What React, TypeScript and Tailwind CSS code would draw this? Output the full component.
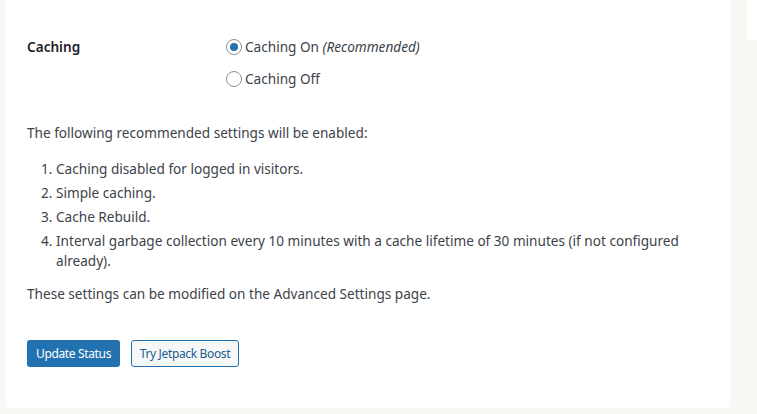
import { useState } from "react";

const FONT = { fontFamily: '"Segoe UI", "Noto Sans", sans-serif' };

function Radio({ checked, onClick, children }: { checked: boolean; onClick: () => void; children: React.ReactNode }) {
  return (
    <label onClick={onClick} className="flex items-center h-[20px] cursor-pointer">
      <span className="w-[16px] h-[16px] rounded-full border border-[#8c8f94] bg-white flex items-center justify-center mr-[3px] shrink-0">
        {checked && <span className="w-[8px] h-[8px] rounded-full bg-[#2271b1]"></span>}
      </span>
      <span>{children}</span>
    </label>
  );
}

export default function App() {
  const [caching, setCaching] = useState(true);

  return (
    <div className="w-[757px] h-[414px] overflow-hidden bg-[#f7f7f4] flex text-[13.6px] leading-[20px] text-[#3c434a]" style={FONT}>
      {/* Settings panel */}
      <div className="ml-[6px] w-[724px] shrink-0 h-[408px] bg-white rounded-b-[4px] px-[21px] pt-[37px]">
        <div className="flex">
          <div className="w-[199px] font-semibold text-[#1d2327]">Caching</div>
          <div className="flex flex-col gap-[12px]">
            <Radio checked={caching} onClick={() => setCaching(true)}>
              Caching On <em>(Recommended)</em>
            </Radio>
            <Radio checked={!caching} onClick={() => setCaching(false)}>
              Caching Off
            </Radio>
          </div>
        </div>

        <p className="mt-[34px]">The following recommended settings will be enabled:</p>
        <ol className="mt-[16px] ml-[29px] list-decimal flex flex-col gap-[4px]">
          <li>Caching disabled for logged in visitors.</li>
          <li>Simple caching.</li>
          <li>Cache Rebuild.</li>
          <li>Interval garbage collection every 10 minutes with a cache lifetime of 30 minutes (if not configured already).</li>
        </ol>
        <p className="mt-[13px]">These settings can be modified on the Advanced Settings page.</p>

        <div className="flex gap-[11px] mt-[36px] text-[12px] tracking-[-0.35px]">
          <button className="h-[27px] w-[93px] rounded-[3px] bg-[#2271b1] text-white">Update Status</button>
          <button className="h-[27px] w-[108px] rounded-[3px] border border-[#2271b1] bg-[#f6f7f7] text-[#235d8f]">Try Jetpack Boost</button>
        </div>
      </div>

      {/* Sidebar box */}
      <div className="ml-[17px] w-[60px] shrink-0 h-[40px] bg-white rounded-bl-[3px]"></div>
    </div>
  );
}
